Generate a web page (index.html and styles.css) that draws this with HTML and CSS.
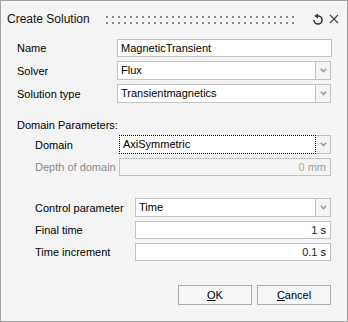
FILE: index.html
```html
<!DOCTYPE html>
<html>
<head>
<meta charset="utf-8">
<link rel="stylesheet" href="styles.css">
</head>
<body>
<div class="window">
  <div class="titlebar">
    <span class="title">Create Solution</span>
    <div class="grip"></div>
    <svg class="icon-reset" width="12" height="12" viewBox="0 0 12 12">
      <path d="M6 3 A4 4 0 1 1 2 7" fill="none" stroke="#333" stroke-width="1.6"/>
      <polygon points="2.2,3 6,0.6 6,5.4" fill="#333"/>
    </svg>
    <svg class="icon-close" width="10" height="10" viewBox="0 0 10 10">
      <path d="M1 1 L9 9 M9 1 L1 9" stroke="#444" stroke-width="1.1" fill="none"/>
    </svg>
  </div>
  <div class="content">
    <div class="grid main">
      <label>Name</label>
      <div class="field text">MagneticTransient</div>
      <label>Solver</label>
      <div class="combo"><div class="field">Flux</div><div class="drop"><svg width="7" height="5" viewBox="0 0 7 5"><path d="M0.8 0.8 L3.5 3.6 L6.2 0.8" fill="none" stroke="#9a9a9a" stroke-width="1.5"/></svg></div></div>
      <label>Solution type</label>
      <div class="combo"><div class="field">Transientmagnetics</div><div class="drop"><svg width="7" height="5" viewBox="0 0 7 5"><path d="M0.8 0.8 L3.5 3.6 L6.2 0.8" fill="none" stroke="#9a9a9a" stroke-width="1.5"/></svg></div></div>
    </div>
    <div class="group-label">Domain Parameters:</div>
    <div class="grid domain">
      <label>Domain</label>
      <div class="combo"><div class="field focus">AxiSymmetric</div><div class="drop"><svg width="7" height="5" viewBox="0 0 7 5"><path d="M0.8 0.8 L3.5 3.6 L6.2 0.8" fill="none" stroke="#9a9a9a" stroke-width="1.5"/></svg></div></div>
      <label class="disabled">Depth of domain</label>
      <div class="field text value disabled-field"><span class="num-dis">0</span>&nbsp;mm</div>
    </div>
    <div class="grid control">
      <label>Control parameter</label>
      <div class="combo"><div class="field">Time</div><div class="drop"><svg width="7" height="5" viewBox="0 0 7 5"><path d="M0.8 0.8 L3.5 3.6 L6.2 0.8" fill="none" stroke="#9a9a9a" stroke-width="1.5"/></svg></div></div>
      <label>Final time</label>
      <div class="field text value"><span class="num">1</span>&nbsp;s</div>
      <label>Time increment</label>
      <div class="field text value"><span class="num">0.1</span>&nbsp;s</div>
    </div>
    <div class="buttons">
      <button class="btn"><u>O</u>K</button>
      <button class="btn"><u>C</u>ancel</button>
    </div>
  </div>
</div>
</body>
</html>
```
FILE: styles.css
```css
html, body {
  margin: 0;
  padding: 0;
  background: #f4f4f4;
}
body {
  font-family: "Liberation Sans", Arial, sans-serif;
  font-size: 11px;
  color: #000000;
}
.window {
  width: 348px;
  height: 322px;
  box-sizing: border-box;
  border: 1px solid #a3a3a3;
  background: #f4f4f4;
  display: flex;
  flex-direction: column;
}
.titlebar {
  height: 36px;
  display: flex;
  align-items: center;
  padding-left: 6px;
}
.title {
  font-size: 12px;
  color: #111111;
  width: 99px;
  flex: none;
}
.grip {
  width: 192px;
  height: 8px;
  margin-top: 1px;
  background-image: radial-gradient(circle at 1px 1px, #888888 1px, transparent 1.2px);
  background-size: 6px 6px;
  flex: none;
}
.icon-reset {
  margin-left: 14px;
  margin-top: -1px;
  flex: none;
}
.icon-close {
  margin-left: 5px;
  flex: none;
}
.content {
  display: flex;
  flex-direction: column;
  padding: 2px 15px 0 16px;
}
.grid {
  display: grid;
  row-gap: 4px;
  align-items: center;
}
.main {
  grid-template-columns: 100px 1fr;
}
.domain {
  grid-template-columns: 84px 1fr;
  padding-left: 18px;
  margin-top: 3px;
  margin-right: 1px;
}
.control {
  grid-template-columns: 100px 1fr;
  padding-left: 18px;
  margin-top: 22px;
  margin-right: 1px;
}
label {
  line-height: 14px;
  white-space: nowrap;
}
label.disabled {
  color: #8a8a8a;
}
.field {
  box-sizing: border-box;
  height: 19px;
  border: 1px solid #c3c3c3;
  background: #ffffff;
  padding: 0 3px;
  line-height: 17px;
  white-space: nowrap;
  overflow: hidden;
}
.field.text {
  height: 18px;
  line-height: 16px;
}
.field.focus {
  border: 1px dotted #000;
}
.value {
  text-align: right;
  padding-right: 4px;
}
.num {
  color: #2a1630;
}
.disabled-field {
  background: #f4f4f4;
  color: #9c9c9c;
}
.num-dis {
  color: #c4a585;
}
.main .combo {
  margin-right: 1px;
}
.combo {
  display: flex;
  height: 19px;
}
.combo .field {
  flex: 1;
}
.drop {
  box-sizing: border-box;
  width: 15px;
  height: 19px;
  border: 1px solid #c3c3c3;
  border-left: none;
  background: #f4f4f4;
  display: flex;
  align-items: center;
  justify-content: center;
}
.group-label {
  margin-top: 15px;
  line-height: 14px;
}
.buttons {
  display: flex;
  justify-content: flex-end;
  gap: 5px;
  margin-top: 24px;
  margin-right: 1px;
}
.btn {
  width: 74px;
  height: 20px;
  box-sizing: border-box;
  border: 1px solid #adadad;
  background: #f6f6f6;
  font-family: "Liberation Sans", Arial, sans-serif;
  font-size: 11px;
  color: #000000;
  padding: 0;
  border-radius: 0;
}
```
